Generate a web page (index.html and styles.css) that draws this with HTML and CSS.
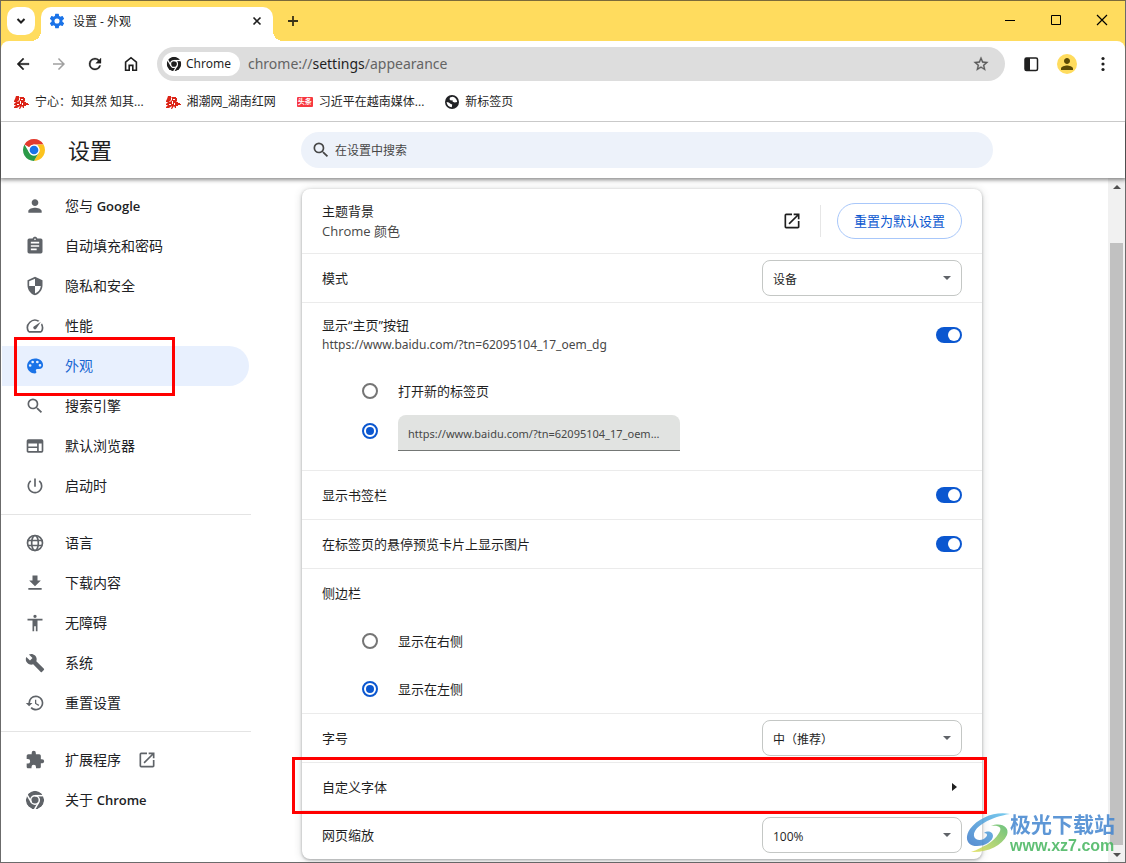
FILE: index.html
```html
<!DOCTYPE html>
<html lang="zh-CN">
<head>
<meta charset="utf-8">
<title>设置 - 外观</title>
<link rel="stylesheet" href="styles.css">
</head>
<body>
<svg class="defs" aria-hidden="true">
  <symbol id="chrome-mono" viewBox="0 0 24 24">
    <mask id="chrome-cut">
      <circle cx="12" cy="12" r="11" fill="#fff"/>
      <g stroke="#000" stroke-width="1.8" fill="none">
        <circle cx="12" cy="12" r="5.2"/>
        <path d="M12 6.8h11"/>
        <path d="M12 6.8h11" transform="rotate(120 12 12)"/>
        <path d="M12 6.8h11" transform="rotate(240 12 12)"/>
      </g>
    </mask>
    <circle cx="12" cy="12" r="11" fill="currentColor" mask="url(#chrome-cut)"/>
  </symbol>
  <symbol id="search" viewBox="0 0 24 24"><path d="M15.5 14h-.79l-.28-.27A6.47 6.47 0 0 0 16 9.5 6.5 6.5 0 1 0 9.5 16c1.61 0 3.09-.59 4.23-1.57l.27.28v.79l5 4.99L20.49 19l-4.99-5zm-6 0C7.01 14 5 11.99 5 9.5S7.01 5 9.5 5 14 7.01 14 9.5 11.99 14 9.5 14z"/></symbol>
  <symbol id="launch" viewBox="0 0 24 24"><path d="M19 19H5V5h7V3H5a2 2 0 0 0-2 2v14a2 2 0 0 0 2 2h14c1.1 0 2-.9 2-2v-7h-2v7zM14 3v2h3.59l-9.83 9.83 1.41 1.41L19 6.41V10h2V3h-7z"/></symbol>
  <symbol id="person" viewBox="0 0 24 24"><path d="M12 12c2.21 0 4-1.79 4-4s-1.79-4-4-4-4 1.79-4 4 1.79 4 4 4zm0 2c-2.67 0-8 1.34-8 4v2h16v-2c0-2.66-5.33-4-8-4z"/></symbol>
  <symbol id="red-mark" viewBox="0 0 16 14"><path d="M3 1h3v2l1-1h4v1h1v3l-1 1h2v1h2v1h1v1h-3v1h-2v2h-1l-1-2-2 3H6l1-3-3 2H1v-1l2-2H1V9l2-2H1V6l1-2z" fill="#dc2417"/><path d="M6 3h1v2l-2 2H4l2-2zM8 4h2v1H8zM7 6h1v3H7zM4 9h2v1H4zM9 8h1v2H9z" fill="#fff"/></symbol>
</svg>

<div class="window">
  <header class="tabstrip">
    <button class="tab-search" aria-label="搜索标签页"><svg width="10" height="10" viewBox="0 0 10 10"><path d="M1.500 3l3.500 3.500L8.500 3" fill="none" stroke="#1f1f1f" stroke-width="2"/></svg></button>
    <div class="tab">
      <svg class="tab-icon" width="16" height="16" viewBox="1 1 22 22"><path d="M19.430 12.980c.04-.32.07-.64.07-.98s-.03-.66-.07-.98l2.110-1.650c.19-.15.24-.42.12-.64l-2-3.460c-.12-.22-.39-.3-.61-.22l-2.490 1c-.52-.4-1.080-.73-1.690-.98l-.38-2.650A.49.490 0 0 0 14 2h-4c-.25 0-.46.180-.49.420l-.38 2.650c-.61.250-1.170.590-1.690.980l-2.490-1c-.23-.09-.49 0-.61.220l-2 3.460c-.13.220-.07.490.12.640l2.110 1.650c-.04.320-.07.650-.07.980s.03.660.07.980l-2.110 1.650c-.19.150-.24.420-.12.640l2 3.460c.12.220.39.300.61.220l2.490-1c.52.400 1.080.730 1.690.980l.38 2.650c.03.240.24.420.49.420h4c.25 0 .46-.18.490-.42l.38-2.650c.61-.25 1.170-.59 1.690-.98l2.490 1c.23.090.49 0 .61-.22l2-3.460c.12-.22.07-.49-.12-.64zM12 15.500A3.500 3.500 0 1 1 12 8.500a3.500 3.500 0 0 1 0 7z"/></svg>
      <span class="tab-title">设置 - 外观</span>
      <button class="plain" aria-label="关闭标签页"><svg width="10" height="10" viewBox="0 0 10 10"><path d="M1.500 1.500l7 7m0-7l-7 7" stroke="#1f1f1f" stroke-width="1.600"/></svg></button>
    </div>
    <button class="plain new-tab" aria-label="新标签页"><svg width="12" height="12" viewBox="0 0 12 12"><path d="M1 6h10M6 1v10" stroke="#3a3218" stroke-width="1.800"/></svg></button>
    <div class="window-controls">
      <button class="plain" aria-label="最小化"><svg width="12" height="12" viewBox="0 0 12 12"><path d="M1 6.500h10" stroke="#000"/></svg></button>
      <button class="plain" aria-label="最大化"><svg width="12" height="12" viewBox="0 0 12 12"><path d="M1.500 1.500h9v9h-9z" stroke="#000" fill="none"/></svg></button>
      <button class="plain" aria-label="关闭"><svg width="12" height="12" viewBox="0 0 12 12"><path d="M1 1l10 10M11 1L1 11" stroke="#000" stroke-width="1.200"/></svg></button>
    </div>
  </header>

  <div class="browser-bars">
    <nav class="toolbar" aria-label="工具栏">
      <button class="tool" aria-label="后退"><svg width="18" height="18" viewBox="0 0 24 24"><path d="M20 11H7.830l5.590-5.590L12 4l-8 8 8 8 1.410-1.410L7.830 13H20z" stroke="#1f1f1f" stroke-width=".5"/></svg></button>
      <button class="tool faded" aria-label="前进"><svg width="18" height="18" viewBox="0 0 24 24"><path d="M12 4l-1.410 1.410L16.170 11H4v2h12.170l-5.580 5.590L12 20l8-8z"/></svg></button>
      <button class="tool" aria-label="重新加载"><svg width="18" height="18" viewBox="0 0 24 24"><path d="M17.650 6.350A7.960 7.960 0 0 0 12 4a8 8 0 1 0 7.730 10h-2.080A6 6 0 1 1 12 6c1.660 0 3.140.690 4.220 1.780L13 11h7V4z" stroke="#1f1f1f" stroke-width=".4"/></svg></button>
      <button class="tool" aria-label="主页"><svg width="18" height="18" viewBox="0 0 20 20"><path d="M4 8l6-5 6 5v9h-4v-5.500H8V17H4z" fill="none" stroke="#1f1f1f" stroke-width="1.800"/></svg></button>
      <div class="omnibox">
        <span class="chip"><svg width="16" height="16"><use href="#chrome-mono"/></svg>Chrome</span>
        <span class="url">chrome://<b>settings</b>/appearance</span>
        <button class="plain star" aria-label="添加书签"><svg width="16" height="16" viewBox="1 1 22 22"><path d="M22 9.240l-7.190-.62L12 2 9.190 8.630 2 9.240l5.460 4.730L5.820 21 12 17.270 18.180 21l-1.630-7.030zM12 15.400l-3.760 2.270 1-4.280-3.320-2.880 4.380-.38L12 6.100l1.710 4.040 4.380.38-3.320 2.880 1 4.280z" stroke="#5a5a5a" stroke-width=".4"/></svg></button>
      </div>
      <button class="tool panel" aria-label="侧边栏"><svg width="16" height="16" viewBox="0 0 16 16"><rect x="2" y="2" width="12.500" height="12.500" rx="1.500" fill="none" stroke="#1f1f1f" stroke-width="1.500"/><path d="M2 2h5v12H2z"/></svg></button>
      <button class="tool avatar" aria-label="用户"><svg width="18" height="18"><use href="#person"/></svg></button>
      <button class="tool" aria-label="菜单"><svg width="16" height="16" viewBox="0 0 16 16"><circle cx="8" cy="2.500" r="1.600"/><circle cx="8" cy="8" r="1.600"/><circle cx="8" cy="13.500" r="1.600"/></svg></button>
    </nav>
    <nav class="bookmarks" aria-label="书签">
      <a href="#"><svg width="16" height="14"><use href="#red-mark"/></svg>宁心：知其然 知其...</a>
      <a href="#"><svg width="16" height="14"><use href="#red-mark"/></svg>湘潮网_湖南红网</a>
      <a href="#"><span class="toutiao">头条</span>习近平在越南媒体...</a>
      <a href="#"><svg width="14" height="14" viewBox="0 0 14 14"><circle cx="7" cy="7" r="7" fill="#202124"/><path d="M7.500 1.800L5 2.500 4.500 4.200l1.300 1.200 1.700-.2.200 1.600 2 .6 2.500-.4C12 4.200 10 2 7.500 1.800zM1.600 7l2.200.4 2 1.500 1.400.6-.4 2.800C3.800 12 1.800 10 1.600 7z" fill="#fff"/></svg>新标签页</a>
    </nav>
  </div>

  <header class="page-header">
    <svg class="logo" width="24" height="24" viewBox="0 0 48 48"><circle cx="24" cy="24" r="22" fill="#fff"/><path d="M24 2a22 22 0 0 1 19.050 11H24a11 11 0 0 0-9.530 5.500L4.950 13A22 22 0 0 1 24 2z" fill="#e33b2e"/><path d="M43.050 13A22 22 0 0 1 24 46l9.530-16.500A11 11 0 0 0 33.530 18.500L30 13z" fill="#fcc31e"/><path d="M24 46A22 22 0 0 1 4.950 13l9.520 16.500A11 11 0 0 0 33.530 29.500z" fill="#2a9a48"/><circle cx="24" cy="24" r="11" fill="#fff"/><circle cx="24" cy="24" r="8.700" fill="#1a73e8"/></svg>
    <h1>设置</h1>
    <label class="search-box"><svg width="20" height="20"><use href="#search"/></svg><input type="search" placeholder="在设置中搜索" aria-label="在设置中搜索"></label>
  </header>

  <div class="content">
    <nav class="sidebar" aria-label="设置菜单">
      <a href="#"><svg><use href="#person"/></svg><span>您与 <b>Google</b></span></a>
      <a href="#"><svg viewBox="0 0 24 24"><path d="M19 3h-4.180C14.400 1.840 13.300 1 12 1s-2.400.84-2.820 2H5a2 2 0 0 0-2 2v14a2 2 0 0 0 2 2h14a2 2 0 0 0 2-2V5a2 2 0 0 0-2-2zm-7 0a1 1 0 1 1 0 2 1 1 0 0 1 0-2zm2 14H7v-2h7zm3-4H7v-2h10zm0-4H7V7h10z"/></svg>自动填充和密码</a>
      <a href="#"><svg viewBox="0 0 24 24"><path d="M12 1L3 5v6c0 5.550 3.840 10.740 9 12 5.160-1.260 9-6.450 9-12V5zm0 10.990h7c-.53 4.120-3.280 7.790-7 8.940V12H5V6.300l7-3.110z"/></svg>隐私和安全</a>
      <a href="#"><svg viewBox="0 0 24 24"><path d="M20.380 8.570l-1.230 1.850a8 8 0 0 1-.22 7.580H5.070A8 8 0 0 1 15.580 6.850l1.850-1.230A10 10 0 0 0 3.350 19a2 2 0 0 0 1.720 1h13.850a2 2 0 0 0 1.740-1 10 10 0 0 0-.27-10.440zM10.590 15.410a2 2 0 0 0 2.830 0l5.660-8.490-8.490 5.660a2 2 0 0 0 0 2.830z"/></svg>性能</a>
      <a href="#" class="active" aria-current="page"><svg viewBox="0 0 24 24"><path d="M12 3C7 3 2.500 6.800 2.500 12S7 21 12 21c1 0 1.700-.8 1.700-1.700 0-.9-.7-1.200-.7-2 0-1 .8-1.700 1.700-1.700H17c2.800 0 4.700-2 4.700-4.600C21.700 6.200 17.500 3 12 3zM6.200 13a1.600 1.600 0 1 1 0-3.200 1.600 1.600 0 0 1 0 3.200zm3-4.200a1.600 1.600 0 1 1 0-3.200 1.600 1.600 0 0 1 0 3.200zm5.600 0a1.600 1.600 0 1 1 0-3.200 1.600 1.600 0 0 1 0 3.200zm3.200 4a1.600 1.600 0 1 1 0-3.200 1.600 1.600 0 0 1 0 3.200z"/></svg>外观</a>
      <a href="#"><svg><use href="#search"/></svg>搜索引擎</a>
      <a href="#"><svg viewBox="0 0 24 24"><path d="M20 4H4a2 2 0 0 0-2 2v12c0 1.100.9 2 2 2h16a2 2 0 0 0 2-2V6a2 2 0 0 0-2-2zM4 9h10.500v3.500H4zm0 5.500h10.500V18H4zM20 18h-3.500V9H20z"/></svg>默认浏览器</a>
      <a href="#"><svg viewBox="0 0 24 24"><path d="M13 3h-2v10h2zm4.830 2.170l-1.420 1.420A6.920 6.920 0 0 1 19 12a7 7 0 1 1-11.420-5.420L6.170 5.170A9 9 0 1 0 21 12a8.930 8.930 0 0 0-3.170-6.830z"/></svg>启动时</a>
      <hr>
      <a href="#"><svg viewBox="0 0 24 24"><g fill="none" stroke="currentColor" stroke-width="2"><circle cx="12" cy="12" r="9"/><ellipse cx="12" cy="12" rx="4" ry="9"/><path d="M3.500 9h17M3.500 15h17"/></g></svg>语言</a>
      <a href="#"><svg viewBox="0 0 24 24"><path d="M19 9h-4V3H9v6H5l7 7zM4 18v2h16v-2z"/></svg>下载内容</a>
      <a href="#"><svg viewBox="0 0 24 24"><path d="M12 2a2 2 0 1 1 0 4 2 2 0 0 1 0-4zm9 7h-6v13h-2v-6h-2v6H9V9H3V7h18z"/></svg>无障碍</a>
      <a href="#"><svg viewBox="0 0 24 24"><path d="M22.700 19l-9.100-9.100c.9-2.300.4-5-1.500-6.900-2-2-5-2.400-7.400-1.300L9 6 6 9 1.600 4.700C.4 7.100.9 10.100 2.900 12.100c1.900 1.900 4.600 2.400 6.900 1.500l9.100 9.100c.4.400 1 .4 1.400 0l2.300-2.300c.5-.4.5-1.100.1-1.400z"/></svg>系统</a>
      <a href="#"><svg viewBox="0 0 24 24"><path d="M13 3a9 9 0 0 0-9 9H1l3.890 3.890.07.14L9 12H6a7 7 0 1 1 2.060 4.940l-1.420 1.420A9 9 0 1 0 13 3zm-1 5v5l4.250 2.520.77-1.280-3.520-2.090V8z"/></svg>重置设置</a>
      <hr>
      <a href="#"><svg viewBox="0 0 24 24"><path d="M20.500 11H19V7a2 2 0 0 0-2-2h-4V3.500a2.500 2.500 0 0 0-5 0V5H4a2 2 0 0 0-2 2v3.800h1.500a2.700 2.700 0 0 1 0 5.400H2V20c0 1.100.9 2 2 2h3.800v-1.500a2.700 2.700 0 0 1 5.400 0V22H17a2 2 0 0 0 2-2v-4h1.500a2.500 2.500 0 0 0 0-5z"/></svg>扩展程序<svg class="external"><use href="#launch"/></svg></a>
      <a href="#"><svg><use href="#chrome-mono"/></svg><span>关于 <b>Chrome</b></span></a>
    </nav>

    <main class="main">
      <section class="card">
        <div class="row tall">
          <div class="label">主题背景<small>Chrome 颜色</small></div>
          <button class="plain launch" aria-label="打开主题背景"><svg width="20" height="20"><use href="#launch"/></svg></button>
          <span class="divider"></span>
          <button class="reset">重置为默认设置</button>
        </div>
        <div class="row"><label class="label" for="mode">模式</label><span class="select"><select id="mode"><option>设备</option></select></span></div>
        <div class="group home">
          <div class="row tall"><label class="label" for="home">显示“主页”按钮<small class="address">https://www.baidu.com/?tn=62095104_17_oem_dg</small></label><input class="toggle" type="checkbox" id="home" checked></div>
          <label class="option"><input type="radio" name="homepage">打开新的标签页</label>
          <div class="option custom"><input type="radio" name="homepage" aria-label="输入自定义网址" checked><input class="address-box" type="text" aria-label="自定义网址" value="https://www.baidu.com/?tn=62095104_17_oem_dg"></div>
        </div>
        <div class="row"><label class="label" for="bar">显示书签栏</label><input class="toggle" type="checkbox" id="bar" checked></div>
        <div class="row"><label class="label" for="hover">在标签页的悬停预览卡片上显示图片</label><input class="toggle" type="checkbox" id="hover" checked></div>
        <div class="group">
          <div class="row"><div class="label">侧边栏</div></div>
          <label class="option"><input type="radio" name="side">显示在右侧</label>
          <label class="option"><input type="radio" name="side" checked>显示在左侧</label>
        </div>
        <div class="row"><label class="label" for="size">字号</label><span class="select"><select id="size"><option>中（推荐）</option></select></span></div>
        <a href="#" class="row marked"><span class="label">自定义字体</span><svg class="arrow" width="16" height="16" viewBox="0 0 16 16"><path d="M6 4l5 4-5 4z"/></svg></a>
        <div class="row"><label class="label" for="zoom">网页缩放</label><span class="select"><select id="zoom"><option>100%</option></select></span></div>
      </section>
    </main>

    <div class="scrollbar"><i class="up"></i><span class="thumb"></span><i class="down"></i></div>
  </div>

  <div class="watermark">
    <svg width="44" height="42" viewBox="0 0 44 42"><defs><linearGradient id="wm-blue" x1="0" y1="1" x2="1" y2="0"><stop offset="0" stop-color="#3c78c8"/><stop offset="1" stop-color="#62c4ec"/></linearGradient><linearGradient id="wm-green" x1="0" y1="1" x2="1" y2="0"><stop offset="0" stop-color="#e3df5a"/><stop offset="1" stop-color="#55b96a"/></linearGradient></defs><path d="M44 2C30-1 13 5 4 17c-6 9-3 17 7 17 8 0 16-5 16-10 0-4-5-6-9-3 3 0 4 2 2 4-3 4-11 4-12-1C7 15 24 5 44 2z" fill="url(#wm-blue)"/><path d="M25 14c7-1 12 1 8 7-5 9-17 15-28 19 15 1 31-6 36-17 3-8-6-13-16-9z" fill="url(#wm-green)"/></svg>
    <div><div class="wm-name">极光下载站</div><div class="wm-site">www.xz7.com</div></div>
  </div>
</div>
</body>
</html>
```
FILE: styles.css
```css
* { box-sizing: border-box; }

body {
  margin: 0;
  background: #fff;
  color: #1f1f1f;
  font-family: "Open Sans", "Noto Sans CJK SC", sans-serif;
  font-size: 13px;
  line-height: 20px;
}

button, input, select { font: inherit; color: inherit; margin: 0; }
a { color: inherit; text-decoration: none; }
svg { display: block; flex: none; fill: currentColor; }
.defs { position: absolute; width: 0; height: 0; }

.plain {
  display: grid;
  place-items: center;
  padding: 0;
  border: 0;
  background: none;
}

.window {
  position: relative;
  display: flex;
  flex-direction: column;
  min-height: 100vh;
  border: 1px solid #6b6b6b;
  border-top-color: #7b6b3a;
}

/* Tab strip */
.tabstrip {
  display: flex;
  align-items: flex-end;
  height: 40px;
  padding-left: 6px;
  background: #ffdc5e;
}

.tab-search {
  display: grid;
  place-items: center;
  width: 28px;
  height: 28px;
  margin: 0 6px 6px 0;
  padding: 0;
  border: 0;
  border-radius: 10px;
  background: #fff;
}

.tab {
  position: relative;
  display: flex;
  align-items: center;
  gap: 8px;
  width: 232px;
  height: 34px;
  padding: 0 11px 6px 8px;
  border-radius: 10px 10px 0 0;
  background: #fff;
  font-size: 12px;
}

.tab::before, .tab::after {
  content: "";
  position: absolute;
  bottom: 0;
  width: 10px;
  height: 10px;
}
.tab::before { right: 100%; background: radial-gradient(circle at 0 0, transparent 10px, #fff 10px); }
.tab::after { left: 100%; background: radial-gradient(circle at 100% 0, transparent 10px, #fff 10px); }
.tab-icon { color: #1a73e8; }
.tab-title { flex: 1; padding-top: 2px; }
.new-tab { width: 28px; height: 28px; margin: 0 0 6px 6px; }
.window-controls { display: flex; align-self: flex-start; margin-left: auto; }
.window-controls .plain { width: 46px; height: 38px; }

/* Toolbar and bookmarks */
.browser-bars {
  position: relative;
  z-index: 2;
  background: #ffdc5e;
  border-bottom: 1px solid #c9c9c9;
}
.toolbar {
  display: flex;
  align-items: center;
  height: 46px;
  padding: 0 4px;
  border-radius: 8px 8px 0 0;
  background: #fff;
}
.tool {
  display: grid;
  place-items: center;
  width: 36px;
  height: 36px;
  padding: 0;
  border: 0;
  background: none;
}
.faded { color: #a0a0a0; }
.omnibox {
  display: flex;
  flex: 1;
  align-items: center;
  height: 34px;
  margin: 0 8px;
  padding: 0 16px 0 5px;
  border-radius: 17px;
  background: #ddd;
}
.chip {
  display: flex;
  align-items: center;
  gap: 4px;
  height: 24px;
  padding: 0 9px 0 4px;
  border-radius: 12px;
  background: #fff;
  font-family: "Noto Sans", sans-serif;
  font-size: 12px;
}
.url {
  flex: 1;
  margin-left: 8px;
  color: #646464;
  font-family: "Noto Sans", sans-serif;
  font-size: 14px;
}
.url b { color: #1f1f1f; font-weight: 400; }
.star { color: #5a5a5a; }
.avatar { position: relative; color: #5c4a05; }
.avatar::before {
  content: "";
  position: absolute;
  inset: 8px;
  border-radius: 50%;
  background: #ffdc5e;
}
.avatar svg { position: relative; }

.bookmarks {
  display: flex;
  gap: 21px;
  height: 34px;
  padding: 0 12px 4px;
  background: #fff;
  font-size: 12px;
}
.bookmarks a { display: flex; align-items: center; gap: 6px; white-space: nowrap; }
.toutiao {
  width: 16px;
  border-radius: 1px;
  background: #f7373f;
  color: #fff;
  font-size: 7px;
  font-weight: 700;
  line-height: 10px;
  text-align: center;
}

/* Settings header */
.page-header {
  position: relative;
  z-index: 1;
  display: grid;
  grid-template-columns: 24px 211px minmax(0, 692px);
  align-items: center;
  height: 56px;
  padding-left: 21px;
  column-gap: 22px;
  background: #fff;
  box-shadow: 0 1px 4px 1px rgba(0, 0, 0, .45);
}
.page-header h1 { margin: 0; font-size: 22px; font-weight: 400; line-height: 28px; }
.search-box {
  display: flex;
  align-items: center;
  gap: 4px;
  height: 36px;
  padding: 0 10px;
  border-radius: 18px;
  background: #edf2fa;
  color: #474747;
}
.search-box input {
  flex: 1;
  padding: 2px 0 0;
  border: 0;
  background: none;
  font-size: 12px;
}
.search-box input::placeholder { color: #474747; }

/* Settings body */
.content { display: flex; flex: 1; }
.sidebar {
  flex: none;
  width: 250px;
  padding-top: 8px;
  color: #202124;
  font-size: 14px;
}
.sidebar b { font-size: 13px; font-weight: 600; }
.sidebar a {
  display: flex;
  align-items: center;
  gap: 20px;
  height: 40px;
  margin: 0 2px 0 1px;
  padding-left: 23px;
  border-radius: 0 20px 20px 0;
}
.sidebar svg { width: 20px; height: 20px; color: #5f6368; }
.sidebar .external { margin-left: -4px; }
.sidebar hr { margin: 8px 0; border: 0; border-top: 1px solid #e4e4e4; }
.sidebar .active { position: relative; background: #e8f0fe; color: #1967d2; }
.sidebar .active svg { color: #1a73e8; }
.active::after {
  content: "";
  position: absolute;
  z-index: 1;
  inset: -9px 74px -10px 12px;
  border: 3px solid #f00;
}

.main { flex: 1; min-width: 0; padding: 11px 8px 3px 51px; }
.card {
  max-width: 680px;
  border-radius: 8px;
  background: #fff;
  box-shadow: 0 1px 3px rgba(60, 64, 67, .4), 0 1px 8px rgba(60, 64, 67, .2);
}
.row { display: flex; align-items: center; min-height: 48px; padding: 0 20px; }
.tall { min-height: 64px; }
.card > * { box-sizing: content-box; }
.card > * + * { border-top: 1px solid #ebebeb; }
.label { flex: 1; }
.label small { display: block; color: #474747; font-size: 13px; }
.label .address { font-family: "Noto Sans", sans-serif; font-size: 12px; }
.launch { margin-right: 18px; }
.divider { width: 1px; height: 32px; margin-right: 16px; background: #e6e6e6; }
.reset {
  height: 36px;
  padding: 0 16px;
  border: 1px solid #a8c7fa;
  border-radius: 18px;
  background: #fff;
  color: #0b57d0;
}

.select { position: relative; width: 200px; }
.select::after {
  content: "";
  position: absolute;
  top: 16px;
  right: 11px;
  border: 4px solid transparent;
  border-top-color: #5f6368;
  border-bottom: 0;
  pointer-events: none;
}
.select select {
  display: block;
  width: 100%;
  height: 36px;
  padding: 3px 24px 0 10px;
  border: 1px solid #c4c7c5;
  border-radius: 8px;
  background: #fff;
  font-size: 12px;
  appearance: none;
}

.toggle {
  appearance: none;
  width: 26px;
  height: 16px;
  padding: 2px;
  border-radius: 8px;
  background: #b0b0b0;
}
.toggle::before {
  content: "";
  display: block;
  width: 12px;
  height: 12px;
  border-radius: 50%;
  background: #fff;
}
.toggle:checked { background: #0b57d0; }
.toggle:checked::before { margin-left: auto; }

.home { padding-bottom: 19px; }
.option {
  display: flex;
  align-items: center;
  gap: 20px;
  min-height: 48px;
  padding-left: 60px;
}
.option [type="radio"] {
  display: grid;
  place-items: center;
  appearance: none;
  width: 16px;
  height: 16px;
  border: 2px solid #757575;
  border-radius: 50%;
}
.option [type="radio"]:checked { border-color: #0b57d0; }
.option [type="radio"]:checked::before {
  content: "";
  width: 8px;
  height: 8px;
  border-radius: 50%;
  background: #0b57d0;
}
.custom { align-items: flex-start; min-height: 36px; }
.custom [type="radio"] { margin-top: 8px; }
.address-box {
  width: 282px;
  height: 36px;
  padding: 2px 16px 0 10px;
  border: 0;
  border-bottom: 1px solid #747775;
  border-radius: 8px 8px 0 0;
  background: #e1e3e1;
  color: #474747;
  font-family: "Noto Sans", sans-serif;
  font-size: 11px;
  text-overflow: ellipsis;
}

.marked { position: relative; min-height: 47px; }
.marked::after {
  content: "";
  position: absolute;
  inset: -6px -5px -4px -10px;
  border: 3px solid #f00;
}

.scrollbar {
  display: flex;
  flex: none;
  flex-direction: column;
  align-items: center;
  width: 17px;
  padding: 7px 0 5px;
  background: #f1f1f1;
}
.scrollbar i { border: 4px solid transparent; }
.scrollbar .up { border-top: 0; border-bottom-color: #505050; }
.scrollbar .down { border-bottom: 0; border-top-color: #505050; }
.thumb { flex: 1; width: 13px; margin: 54px 0 8px; background: #c1c1c1; }

.watermark {
  position: absolute;
  right: 10px;
  bottom: 6px;
  z-index: 2;
  display: flex;
  pointer-events: none;
  opacity: .85;
}
.wm-name { color: #4285d0; font-size: 21px; font-weight: 700; line-height: 24px; }
.wm-site { color: #45b55e; font-family: "Liberation Sans", Arial, sans-serif; font-size: 16px; font-weight: 700; }
```
